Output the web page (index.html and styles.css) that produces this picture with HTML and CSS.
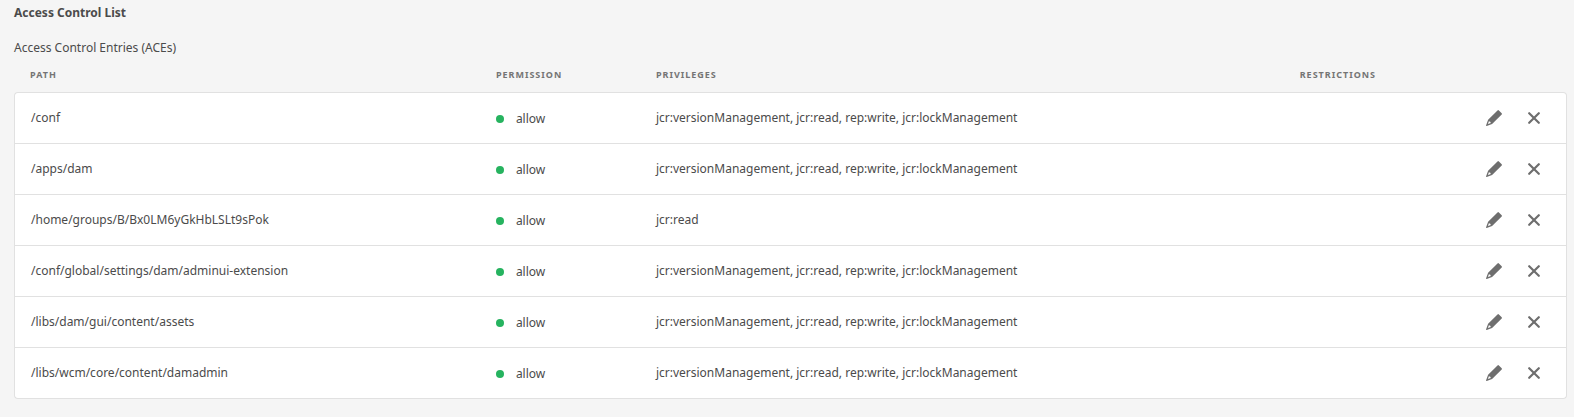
FILE: index.html
```html
<!DOCTYPE html>
<html lang="en">
<head>
    <meta charset="UTF-8">
    <meta name="viewport" content="width=device-width, initial-scale=1.0">
    <title>Access Control List</title>
    <link rel="stylesheet" href="styles.css">
</head>
<body>
    <svg class="sprite" aria-hidden="true">
        <symbol id="icon-edit" viewBox="0 0 18 18">
            <path d="M12.5 1.4 Q13.2 .8 13.9 1.4 L16.7 4.2 Q17.3 4.9 16.7 5.6 L7.1 14.9 L1.7 16.9 Q.9 17.1 1.1 16.3 L3.1 10.8 Z M3.9 12.3 L2.9 15.1 L5.8 14.1 Q5.7 12.5 3.9 12.3 Z" fill-rule="evenodd"/>
        </symbol>
        <symbol id="icon-close" viewBox="0 0 12 12">
            <path d="M1.2 1.2 L10.8 10.8 M10.8 1.2 L1.2 10.8" stroke="currentColor" stroke-width="2.2" stroke-linecap="round"/>
        </symbol>
    </svg>

    <h1>Access Control List</h1>

    <table class="acl">
        <caption>Access Control Entries (ACEs)</caption>
        <thead>
            <tr>
                <th class="col-path" scope="col">PATH</th>
                <th class="col-permission" scope="col">PERMISSION</th>
                <th class="col-privileges" scope="col">PRIVILEGES</th>
                <th class="col-restrictions" scope="col">RESTRICTIONS</th>
                <td class="col-actions"></td>
            </tr>
        </thead>
        <tbody id="entries"></tbody>
    </table>

    <script>
        const all = 'jcr:versionManagement, jcr:read, rep:write, jcr:lockManagement';
        const entries = [
            { path: '/conf', privileges: all },
            { path: '/apps/dam', privileges: all },
            { path: '/home/groups/B/Bx0LM6yGkHbLSLt9sPok', privileges: 'jcr:read' },
            { path: '/conf/global/settings/dam/adminui-extension', privileges: all },
            { path: '/libs/dam/gui/content/assets', privileges: all },
            { path: '/libs/wcm/core/content/damadmin', privileges: all }
        ];

        document.getElementById('entries').innerHTML = entries.map(entry => `
            <tr>
                <td>${entry.path}</td>
                <td><span class="permission">allow</span></td>
                <td>${entry.privileges}</td>
                <td></td>
                <td>
                    <div class="actions">
                        <button type="button" aria-label="Edit ${entry.path}">
                            <svg class="icon-edit"><use href="#icon-edit"/></svg>
                        </button>
                        <button type="button" aria-label="Delete ${entry.path}">
                            <svg class="icon-close"><use href="#icon-close"/></svg>
                        </button>
                    </div>
                </td>
            </tr>`).join('');
    </script>
</body>
</html>
```

FILE: styles.css
```css
body {
    font-family: "Noto Sans", sans-serif;
    font-size: 12px;
    line-height: 20px;
    margin: 0;
    padding: 3px 7px 18px 14px;
    background-color: #f5f5f5;
    color: #4b4b4b;
}

.sprite {
    display: none;
}

h1 {
    margin: 0 0 15px;
    font-size: 12px;
    line-height: 20px;
}

.acl {
    width: 100%;
    table-layout: fixed;
    border-collapse: separate;
    border-spacing: 0;
}

.acl caption {
    text-align: left;
}

.acl th {
    height: 34px;
    padding: 0 16px;
    font-size: 9px;
    letter-spacing: 1px;
    text-align: left;
    color: #747474;
}

.col-path {
    width: 30%;
}

.col-permission {
    width: 160px;
}

.col-restrictions {
    width: 10%;
}

.col-actions {
    width: 128px;
}

.col-privileges {
    width: auto;
}

.acl th,
.acl td {
    box-sizing: border-box;
}

.acl tbody td {
    height: 51px;
    padding: 0 16px;
    background-color: white;
    border-bottom: 1px solid #e1e1e1;
}

.acl tbody tr:first-child td {
    height: 52px;
    border-top: 1px solid #e1e1e1;
}

.acl tbody td:first-child {
    border-left: 1px solid #e1e1e1;
}

.acl tbody td:last-child {
    border-right: 1px solid #e1e1e1;
}

.acl tbody tr:first-child td:first-child {
    border-top-left-radius: 4px;
}

.acl tbody tr:first-child td:last-child {
    border-top-right-radius: 4px;
}

.acl tbody tr:last-child td:first-child {
    border-bottom-left-radius: 4px;
}

.acl tbody tr:last-child td:last-child {
    border-bottom-right-radius: 4px;
}

.permission {
    display: flex;
    align-items: center;
    gap: 12px;
    padding-top: 2px;
}

.permission::before {
    content: "";
    width: 8px;
    height: 8px;
    border-radius: 50%;
    background-color: #26b35f;
}

.actions {
    display: flex;
    justify-content: flex-end;
    gap: 8px;
}

button {
    display: flex;
    align-items: center;
    justify-content: center;
    width: 32px;
    height: 32px;
    padding: 0;
    border: none;
    border-radius: 4px;
    background: none;
    color: #6e6e6e;
    cursor: pointer;
}

button:hover {
    color: #323232;
}

.icon-edit {
    width: 18px;
    height: 18px;
    fill: currentColor;
}

.icon-close {
    width: 12px;
    height: 12px;
}
```
